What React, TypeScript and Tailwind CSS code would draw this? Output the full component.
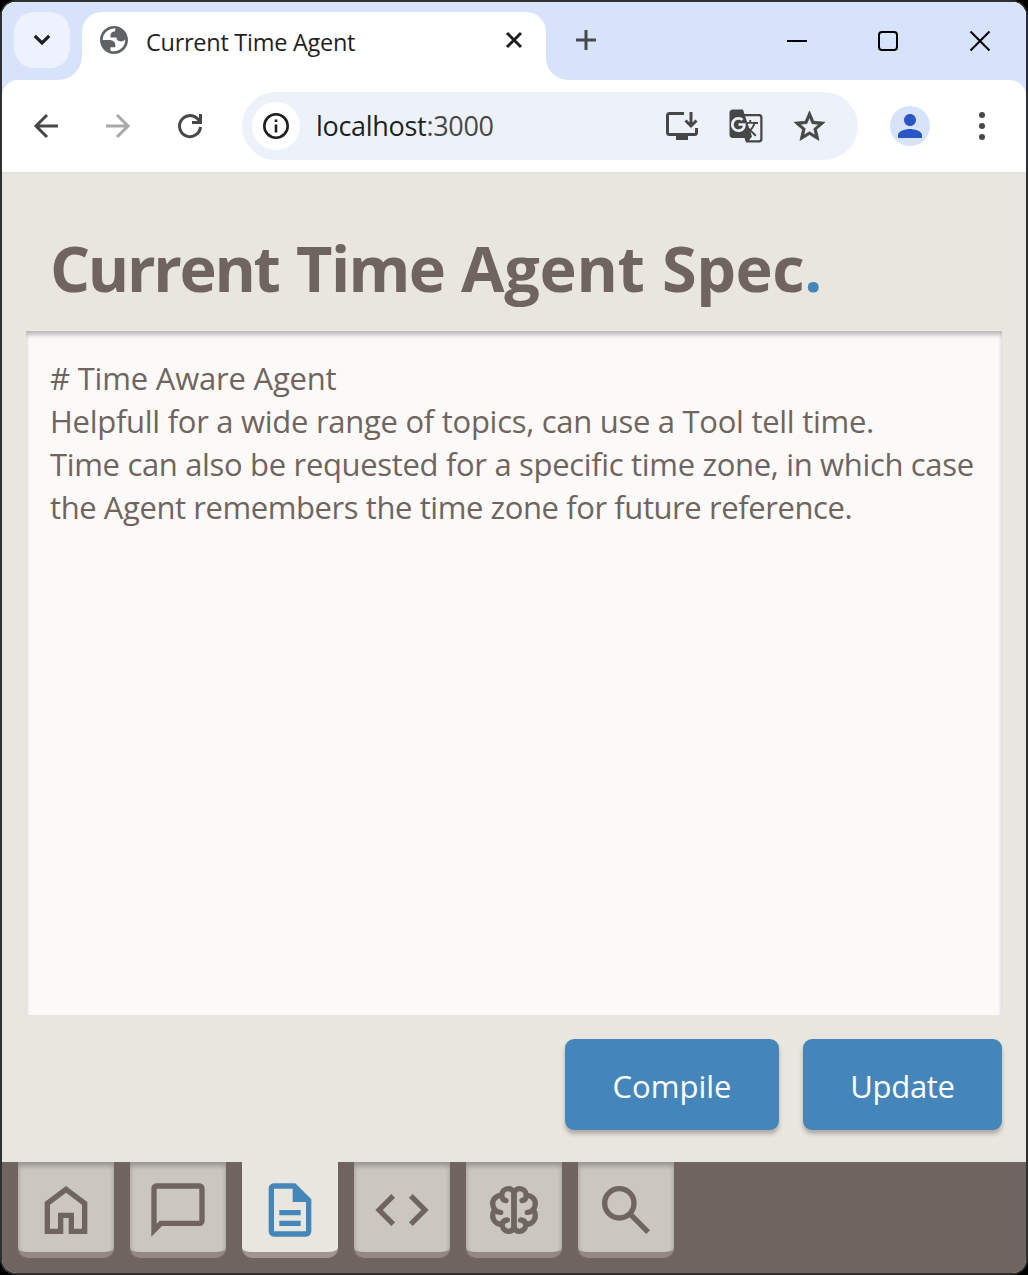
import type { ReactNode } from "react";
import { MdGTranslate, MdPerson, MdStarOutline } from "react-icons/md";

function NavTab({ active, label, children }: { active?: boolean; label: string; children: ReactNode }) {
  return (
    <button
      aria-label={label}
      className={
        active
          ? "flex h-24 w-24 items-center justify-center rounded-b-[10px] border-b-[6px] border-[#a0968f] bg-[#e9e6df] text-[#4486b9]"
          : "flex h-24 w-24 items-center justify-center rounded-b-[10px] border-b-[6px] border-[#938982] bg-[#cbc6c0] text-[#70645f] shadow-[inset_0_4px_5px_rgba(0,0,0,0.25)]"
      }
    >
      <svg viewBox="0 0 24 24" className="mt-1.5 size-16" fill="currentColor">
        {children}
      </svg>
    </button>
  );
}

function BrainHalf({ transform }: { transform?: string }) {
  return (
    <path
      transform={transform}
      d="M12 5.500C11.600 4.600 10.900 4 9.900 4 8.500 4 7.500 5 7.400 6.400 5.400 6.500 4 7.900 4 9.600c0 .9.3 1.600.8 2.200-.5.6-.8 1.300-.8 2.200 0 2 1.500 3.400 3.500 3.500.2 1.500 1.200 2.500 2.500 2.500.9 0 1.600-.5 2-1.400M7.400 6.400c0 1.200.6 2 1.600 2.100M4.800 11.800c.5.7 1.300 1.100 2.200 1.100M7.500 17.500c.2-1 .9-1.700 2-1.750M12 5v14"
    />
  );
}

export default function App() {
  return (
    <div className="h-[1275px] w-[1028px] bg-black font-['Open_Sans',sans-serif]">
      <div className="flex h-full flex-col overflow-hidden rounded-[16px] border-2 border-[#2e2f30] bg-[#e9e6df]">
        <header className="flex h-[78px] shrink-0 bg-[#d7e2fb]">
          <div className="flex w-20 shrink-0 bg-white">
            <div className="w-full rounded-br-[24px] bg-[#d7e2fb] pt-2.5 pl-3">
              <button aria-label="Search tabs" className="flex size-14 items-center justify-center rounded-[20px] bg-[#eef2fe]">
                <svg viewBox="0 0 20 20" className="size-5" fill="none" stroke="#1f1f1f" strokeWidth="3.2">
                  <path d="M2.800 5.800 10 13l7.200-7.200" />
                </svg>
              </button>
            </div>
          </div>
          <div className="w-[464px] shrink-0 bg-[#d7e2fb] pt-2.5">
            <div className="flex h-[68px] items-start rounded-t-[20px] bg-white pt-3.5 pl-[18px]">
              <svg viewBox="2 2 20 20" className="size-7 shrink-0" fill="#5f6368">
                <path
                  fillRule="evenodd"
                  d="M12 2C6.480 2 2 6.480 2 12s4.480 10 10 10 10-4.480 10-10S17.520 2 12 2zM4 12h4.400c3.407.022 4.922 1.730 4.543 5.127H9.488v2.470a8.004 8.004 0 0 0 10.498-8.083C19.327 12.504 18.332 13 17 13c-2.137 0-3.210-.916-3.210-2.749H9.482C9.200 7.417 10.200 6 12.600 6c0-.973.324-1.651.971-2.035A8 8 0 0 0 4 12z"
                />
              </svg>
              <span className="ml-[18px] w-[354px] shrink-0 text-[23.5px] leading-[32px] tracking-[-0.27px] whitespace-nowrap text-[#1f1f1f]">
                Current Time Agent
              </span>
              <svg viewBox="0 0 28 28" className="size-7 shrink-0" fill="none" stroke="#1f1f1f" strokeWidth="3">
                <path d="m7 7 14 14M21 7 7 21" />
              </svg>
            </div>
          </div>
          <div className="flex grow bg-white">
            <div className="flex grow items-start rounded-bl-[22px] bg-[#d7e2fb] pt-6 pl-[26px]">
              <svg viewBox="0 0 28 28" className="size-7" fill="none" stroke="#474747" strokeWidth="3">
                <path d="M14 4v20M4 14h20" />
              </svg>
              <svg viewBox="0 0 28 28" className="ml-[183px] size-7" fill="none" stroke="black" strokeWidth="2">
                <path d="M4 15h20" />
              </svg>
              <svg viewBox="0 0 28 28" className="ml-[63px] size-7" fill="none" stroke="black" strokeWidth="2">
                <rect x="5" y="6" width="18" height="18" rx="3" />
              </svg>
              <svg viewBox="0 0 28 28" className="ml-[64px] size-7" fill="none" stroke="black" strokeWidth="2">
                <path d="m4.500 5.500 19 19m0-19-19 19" />
              </svg>
            </div>
          </div>
        </header>

        <div className="h-[92px] shrink-0 bg-[#d7e2fb]">
          <div className="flex h-full items-center rounded-t-[16px] bg-white">
            <svg viewBox="0 0 32 32" className="ml-7 size-8" fill="none" stroke="#474747" strokeWidth="3">
              <path d="M28 16H6M17 5 6 16l11 11" />
            </svg>
            <svg viewBox="0 0 32 32" className="ml-10 size-8" fill="none" stroke="#a9a9a9" strokeWidth="3">
              <path d="M4 16h22M15 5l11 11-11 11" />
            </svg>
            <svg viewBox="0 0 32 32" className="ml-10 size-8" fill="none" stroke="#474747" strokeWidth="3">
              <path d="M26.500 17A10.500 10.500 0 1 1 23.500 8.700l3 3M26.500 4v8.500H18" />
            </svg>
            <div className="ml-9 flex h-[68px] w-[616px] items-center rounded-full bg-[#edf2fa] pl-2.5">
              <div className="flex size-12 shrink-0 items-center justify-center rounded-full bg-white">
                <svg viewBox="0 0 28 28" className="size-7" fill="none" stroke="#1f1f1f" strokeWidth="2.600">
                  <circle cx="14" cy="14" r="11.700" />
                  <path d="M14 12.500v8M14 7.500v2.500" />
                </svg>
              </div>
              <span className="ml-4 w-[350px] shrink-0 text-[27px] tracking-[-0.3px] text-[#1f1f1f]">
                localhost<span className="text-[#474747]">:3000</span>
              </span>
              <svg viewBox="0 0 32 28" className="h-7 w-8 shrink-0" fill="none" stroke="#474747" strokeWidth="3">
                <path d="M18 1.500H3.500q-2 0-2 2v17q0 2 2 2h25q2 0 2-2V16M25 0v13.500M19.500 8.500l5.500 5.500 5.500-5.500" />
                <path d="M10 26h12" strokeWidth="4" />
              </svg>
              <MdGTranslate className="ml-[30px] size-9 shrink-0 text-[#474747]" />
              <MdStarOutline className="ml-[27px] size-[37px] shrink-0 text-[#474747]" stroke="currentColor" strokeWidth="0.5" />
            </div>
            <div className="ml-8 flex size-10 items-center justify-center rounded-full bg-[#d7e2fb]">
              <MdPerson className="size-9 text-[#2a56c6]" />
            </div>
            <svg viewBox="0 0 8 28" className="ml-12 h-7 w-2" fill="#474747">
              <circle cx="4" cy="3" r="3" />
              <circle cx="4" cy="14" r="3" />
              <circle cx="4" cy="25" r="3" />
            </svg>
          </div>
        </div>

        <main className="flex grow flex-col border-t-2 border-[#dfe3df] px-6">
          <h1 className="mt-[50px] flex h-[107px] pl-6 text-[63px] leading-[88px] font-bold whitespace-nowrap text-[#70645f]">
            <span className="w-[246px] tracking-[-2.3px]">Current </span>
            <span className="w-[165px] tracking-[-1.6px]">Time </span>
            <span className="w-[201px] tracking-[-0.3px]">Agent </span>
            <span className="tracking-[-0.5px]">
              Spec<span className="text-[#4486b9]">.</span>
            </span>
          </h1>
          <div className="h-[684px] shrink-0 bg-[#fbfaf8] px-6 pt-[26px] text-[31px] leading-[43px] whitespace-nowrap text-[#70645f] shadow-[inset_0_4px_4px_rgba(0,0,0,0.25)]">
            <p className="tracking-[-0.2px]"># Time Aware Agent</p>
            <p className="tracking-[-0.28px]">Helpfull for a wide range of topics, can use a Tool tell time.</p>
            <p className="tracking-[-0.33px]">Time can also be requested for a specific time zone, in which case</p>
            <p className="tracking-[-0.42px]">the Agent remembers the time zone for future reference.</p>
          </div>
          <div className="mt-6 flex justify-end gap-6 text-[31px] text-white">
            <button className="h-[91px] w-[214px] rounded-[9px] bg-[#4486b9] pt-1 shadow-[0_4px_4px_rgba(0,0,0,0.25)]">Compile</button>
            <button className="h-[91px] w-[199px] rounded-[9px] bg-[#4486b9] pt-1 tracking-[-0.3px] shadow-[0_4px_4px_rgba(0,0,0,0.25)]">
              Update
            </button>
          </div>
        </main>

        <nav className="flex h-[111px] shrink-0 gap-4 bg-[#70645f] px-4">
          <NavTab label="Home">
            <path d="M6 19h3v-6h6v6h3v-9l-6-4.500L6 10zm-2 2V9l8-6 8 6v12h-7v-6h-2v6z" />
          </NavTab>
          <NavTab label="Chat">
            <path
              fillRule="evenodd"
              d="M20 2H4c-1.100 0-2 .9-2 2v18l4-4h14c1.100 0 2-.9 2-2V4c0-1.100-.9-2-2-2zm0 14H5.170L4 17.170V4h16v12z"
            />
          </NavTab>
          <NavTab active label="Spec">
            <path
              fillRule="evenodd"
              d="M8 16h8v2H8zm0-4h8v2H8zm6-10H6c-1.100 0-2 .9-2 2v16c0 1.100.890 2 1.990 2H18c1.100 0 2-.9 2-2V8l-6-6zm4 18H6V4h7v5h5v11z"
            />
          </NavTab>
          <NavTab label="Code">
            <path d="M9.400 16.600 4.800 12l4.600-4.600L8 6l-6 6 6 6zm5.200 0 4.600-4.600-4.600-4.600L16 6l6 6-6 6z" />
          </NavTab>
          <NavTab label="Memory">
            <g fill="none" stroke="currentColor" strokeWidth="2" strokeLinecap="round" strokeLinejoin="round">
              <BrainHalf />
              <BrainHalf transform="translate(24 0) scale(-1 1)" />
            </g>
          </NavTab>
          <NavTab label="Search">
            <g fill="none" stroke="currentColor" strokeWidth="2">
              <circle cx="9.500" cy="9.500" r="5.500" />
              <path d="m13.300 13.300 7 7" />
            </g>
          </NavTab>
        </nav>
      </div>
    </div>
  );
}
